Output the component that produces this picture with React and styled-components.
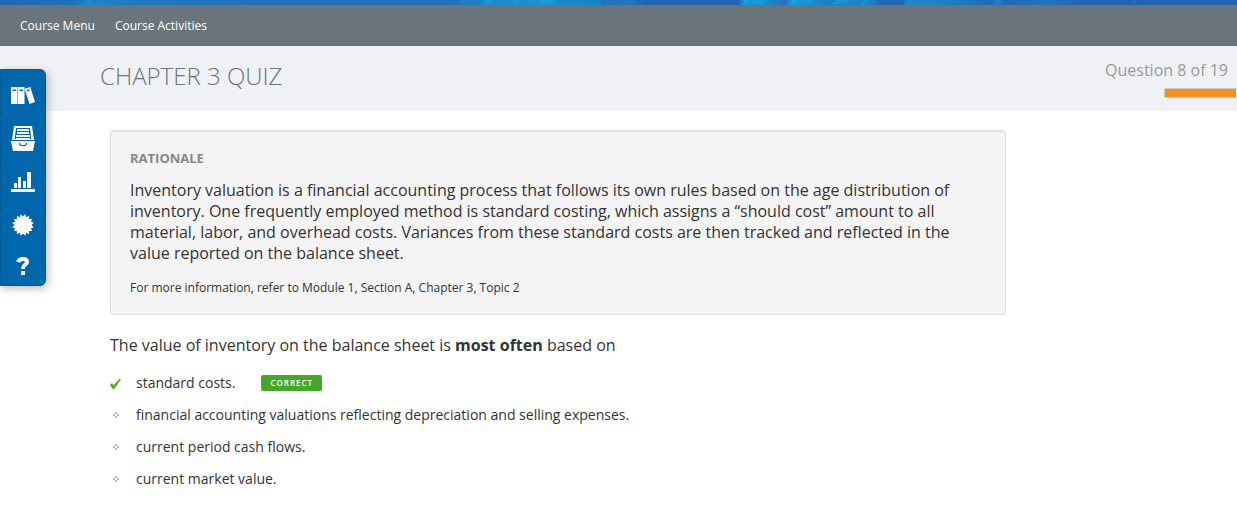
import React from "react";
import styled, { createGlobalStyle } from "styled-components";

const GlobalStyle = createGlobalStyle`
  *, *::before, *::after { box-sizing: border-box; }
  body {
    margin: 0;
    background: #fff;
    color: #333;
    font-family: "Open Sans", "Noto Sans", sans-serif;
  }
`;

const Banner = styled.svg`
  display: block;
  width: 100%;
  height: 5px;
`;

const NavBar = styled.nav`
  display: flex;
  align-items: center;
  gap: 20px;
  min-height: 41px;
  padding: 0 20px;
  background: #6a747c;
`;

const NavLink = styled.a`
  color: #fff;
  font-size: 12px;
  line-height: 20px;
  text-decoration: none;
`;

const QuizHeader = styled.header`
  display: flex;
  justify-content: space-between;
  align-items: flex-start;
  min-height: 65px;
  padding: 14px 0 12px 100px;
  background: #f0f1f5;
`;

const QuizTitle = styled.h1`
  margin: 0;
  color: #6a747c;
  font-size: 24px;
  font-weight: 300;
  line-height: 32px;
  text-transform: uppercase;
`;

const Progress = styled.div`
  display: flex;
  flex-direction: column;
  align-items: flex-end;
  gap: 8px;
`;

const ProgressLabel = styled.span`
  padding-right: 9px;
  color: #999;
  font-size: 16px;
  line-height: 20px;
`;

const ProgressTrack = styled.div`
  width: 73px;
  height: 10px;
  border: 1px solid #ccc;
  border-right: 0;
  border-radius: 2px 0 0 2px;
  background: #fff;
`;

const ProgressFill = styled.div`
  width: calc(100% - 1px);
  height: 100%;
  background: #f68d1e;
`;

const SideMenu = styled.aside`
  position: fixed;
  top: 69px;
  left: 0;
  display: flex;
  flex-direction: column;
  padding: 4px 0 0;
  border: 1px solid #005a96;
  border-radius: 0 6px 6px 0;
  background: #0067ac;
  box-shadow: 2px 3px 8px rgba(0, 0, 0, 0.25);
`;

const SideButton = styled.button`
  display: flex;
  align-items: center;
  justify-content: center;
  width: 44px;
  height: 43px;
  padding: 0;
  border: 0;
  background: none;
  color: #fff;
  cursor: pointer;

  &:last-child { height: 39px; }
`;

const Content = styled.main`
  max-width: 1006px;
  padding: 19px 0 16px 110px;
`;

const RationaleBox = styled.section`
  padding: 16px 19px;
  border: 1px solid #e0e0e0;
  border-top-width: 2px;
  border-radius: 4px;
  background: #f4f4f4;
`;

const RationaleTitle = styled.h2`
  margin: 0 0 12px;
  color: #888;
  font-size: 13px;
  font-weight: 700;
  line-height: 20px;
  text-transform: uppercase;
`;

const RationaleText = styled.p`
  margin: 0 0 14px;
  max-width: 840px;
  font-size: 16px;
  line-height: 21px;
`;

const Reference = styled.p`
  margin: 0;
  font-size: 12px;
  line-height: 20px;
`;

const Question = styled.p`
  margin: 20px 0 11px;
  font-size: 16px;
  line-height: 21px;
`;

const AnswerList = styled.ul`
  margin: 0;
  padding: 0;
  list-style: none;
`;

const Answer = styled.li`
  display: flex;
  align-items: center;
  min-height: 32px;
  font-size: 14px;
  line-height: 20px;
`;

const Marker = styled.span`
  display: flex;
  width: 26px;
`;

const Badge = styled.span`
  margin-left: 26px;
  padding: 0 9px;
  border-radius: 2px;
  background: #43a82a;
  color: #fff;
  font-size: 8px;
  font-weight: 600;
  letter-spacing: 1px;
  line-height: 16px;
  text-transform: uppercase;
`;

const bannerStops = [
  [0, "#2268b5"], [70, "#2070bb"], [90, "#1b86ca"], [130, "#1f7ac2"],
  [250, "#2270bb"], [450, "#226fbb"], [475, "#1f7fc4"], [500, "#1a8bcd"],
  [540, "#1a92d2"], [560, "#1688ca"], [600, "#1784c8"], [602, "#2272ba"],
  [630, "#1f78c0"], [645, "#2364b2"], [738, "#2364b2"], [745, "#159bdc"],
  [785, "#2374bd"], [792, "#139fdc"], [825, "#1c7fc6"], [870, "#1a86ca"],
  [880, "#2169b6"], [904, "#2169b6"], [906, "#1e86ca"], [950, "#1f7fc5"],
  [990, "#2169b6"], [997, "#1c84ca"], [1005, "#2169b6"], [1050, "#2275bd"],
  [1080, "#2364b2"], [1237, "#2364b2"],
];

const streaks = [
  [86, 92], [461, 466], [482, 494], [511, 519], [537, 556], [571, 575],
  [742, 749], [752, 769], [790, 799], [807, 814], [832, 850], [861, 868],
  [1133, 1136],
];

const BannerArt = () => (
  <Banner viewBox="0 0 1237 5" preserveAspectRatio="none" aria-hidden="true">
    <defs>
      <linearGradient id="banner" gradientUnits="userSpaceOnUse" x1="0" y1="0" x2="1237" y2="0">
        {bannerStops.map(([x, color]) => (
          <stop key={x} offset={x / 1237} stopColor={color} />
        ))}
      </linearGradient>
    </defs>
    <rect width="1237" height="5" fill="url(#banner)" />
    {streaks.map(([from, to]) => (
      <path key={from} d={`M${from + 4} 0H${to}L${to - 4} 4H${from}Z`} fill="#12a8e0" opacity="0.5" />
    ))}
  </Banner>
);

const BooksIcon = () => (
  <svg width="24" height="18" viewBox="0 0 24 18" fill="currentColor" aria-hidden="true">
    <path fillRule="evenodd" d="M0 0h6.5v17H0zM1.5 2.5V4H5V2.5z" />
    <path fillRule="evenodd" d="M7 0h6.5v17H7zM8.5 2.5V4H12V2.5z" />
    <path fillRule="evenodd" d="M13.5 1.7 19.3 0 24 15l-5.4 2zM15.5 3.1l.4 1.3 3-1-.4-1.2z" />
  </svg>
);

const TrayIcon = () => (
  <svg width="24" height="25" viewBox="0 0 24 25" fill="currentColor" aria-hidden="true">
    <path fillRule="evenodd" d="M3 0h18l2 14H1zM5 2 3.7 13h16.6L19 2z" />
    <path d="M6 3h12v2H6zM6 6h12v2H6zM5 9h14v2H5zM5 12h14v2H5z" />
    <path fillRule="evenodd" d="M0 15h24l-2 10H2zM8 17c0 2 1 3 2 3h4c1 0 2-1 2-3h-1l-1 2h-4l-1-2z" />
  </svg>
);

const ChartIcon = () => (
  <svg width="24" height="20" viewBox="0 0 24 20" fill="currentColor" aria-hidden="true">
    <path d="M3 11h3v5H3zM7 5h3v11H7zM12 9h3v7h-3zM16 0h4v16h-4zM0 17h24v3H0z" />
  </svg>
);

const burst = Array.from({ length: 32 }, (_, i) => {
  const r = i % 2 ? 8.5 : 11;
  const a = ((i + 1) * Math.PI) / 16;
  return `${11 + r * Math.sin(a)},${11 - r * Math.cos(a)}`;
}).join(" ");

const BurstIcon = () => (
  <svg width="22" height="22" viewBox="0 0 22 22" fill="currentColor" aria-hidden="true">
    <polygon points={burst} />
  </svg>
);

const HelpIcon = () => (
  <svg width="14" height="18" viewBox="0 0 14 18" aria-hidden="true">
    <path d="M2 5C3 2.7 4.5 2 7 2c2.8 0 4 1.2 4 3 0 3-4 2.7-4 6v1" fill="none" stroke="currentColor" strokeWidth="4" />
    <rect x="5" y="14" width="4" height="4" fill="currentColor" />
  </svg>
);

const CheckIcon = () => (
  <svg width="11" height="14" viewBox="0 0 11 14" role="img" aria-label="Correct answer">
    <path d="M0 9 2.2 7.4l1.5 2L9.6 3l1 .6L4 13H3z" fill="#5fa322" stroke="#5fa322" strokeWidth=".5" />
  </svg>
);

const DiamondIcon = () => (
  <svg width="11" height="8" viewBox="0 0 11 8" shapeRendering="crispEdges" aria-hidden="true">
    <path d="M5 1h2v2H5zM3 3h2v2H3zM7 3h2v2H7zM5 5h2v2H5z" fill="#b5b5b5" />
  </svg>
);

const tools = [
  ["Library", BooksIcon],
  ["Resources", TrayIcon],
  ["Reports", ChartIcon],
  ["Achievements", BurstIcon],
  ["Help", HelpIcon],
];

const answers = [
  { text: "standard costs.", correct: true },
  { text: "financial accounting valuations reflecting depreciation and selling expenses." },
  { text: "current period cash flows." },
  { text: "current market value." },
];

export default function App() {
  return (
    <>
      <GlobalStyle />
      <BannerArt />
      <NavBar>
        <NavLink href="#menu">Course Menu</NavLink>
        <NavLink href="#activities">Course Activities</NavLink>
      </NavBar>
      <QuizHeader>
        <QuizTitle>Chapter 3 Quiz</QuizTitle>
        <Progress>
          <ProgressLabel>Question 8 of 19</ProgressLabel>
          <ProgressTrack><ProgressFill /></ProgressTrack>
        </Progress>
      </QuizHeader>
      <SideMenu>
        {tools.map(([label, Icon]) => (
          <SideButton key={label} type="button" aria-label={label}><Icon /></SideButton>
        ))}
      </SideMenu>
      <Content>
        <RationaleBox>
          <RationaleTitle>Rationale</RationaleTitle>
          <RationaleText>
            Inventory valuation is a financial accounting process that follows its own rules based on
            the age distribution of inventory. One frequently employed method is standard costing,
            which assigns a “should cost” amount to all material, labor, and overhead costs. Variances
            from these standard costs are then tracked and reflected in the value reported on the
            balance sheet.
          </RationaleText>
          <Reference>For more information, refer to Module 1, Section A, Chapter 3, Topic 2</Reference>
        </RationaleBox>
        <Question>
          The value of inventory on the balance sheet is <strong>most often</strong> based on
        </Question>
        <AnswerList>
          {answers.map(({ text, correct }) => (
            <Answer key={text}>
              <Marker>{correct ? <CheckIcon /> : <DiamondIcon />}</Marker>
              {text}
              {correct && <Badge>Correct</Badge>}
            </Answer>
          ))}
        </AnswerList>
      </Content>
    </>
  );
}
